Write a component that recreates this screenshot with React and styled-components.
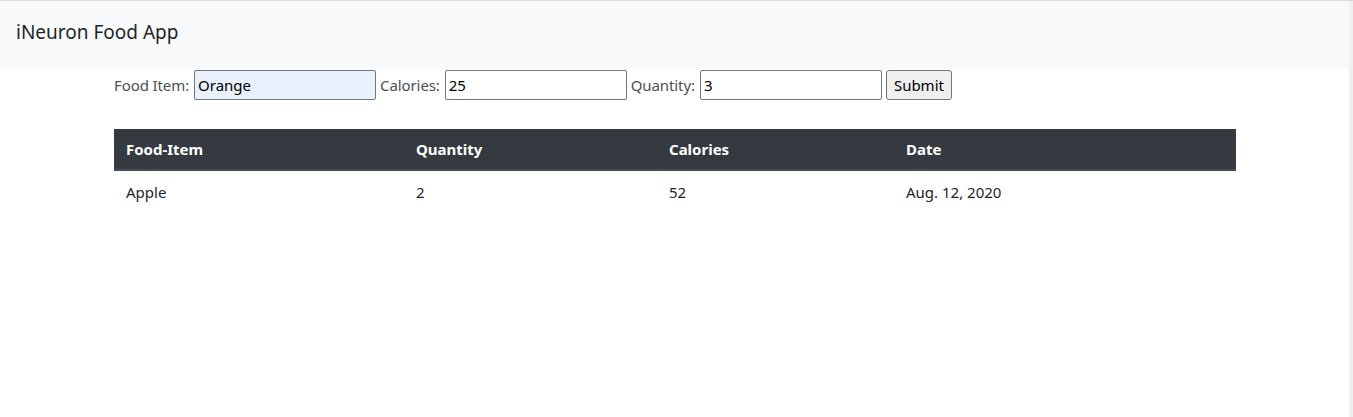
import React from 'react';
import styled, { createGlobalStyle } from 'styled-components';

const GlobalStyle = createGlobalStyle`
  html, body {
    margin: 0;
    padding: 0;
    background: #fff;
  }
  body {
    font-family: 'Noto Sans', 'Open Sans', sans-serif;
    color: #212529;
    border-top: 1px solid #dadada;
    min-height: 416px;
    box-sizing: border-box;
  }
`;

const Page = styled.div`
  display: flex;
  min-height: 416px;
`;

const Main = styled.div`
  flex: 1;
`;

/* 스크롤바 자리 */
const ScrollGutter = styled.div`
  width: 4px;
  background: #f0f0f0;
`;

const Navbar = styled.nav`
  height: 68px;
  background-color: #f8f9fa;
  display: flex;
  align-items: center;
  padding: 0 16px;
`;

const Brand = styled.a`
  font-size: 19px;
  color: #212529;
  text-decoration: none;
  margin-top: -6px;
`;

const Container = styled.div`
  width: 1122px;
  margin-left: 114px;
`;

const Form = styled.form`
  display: flex;
  align-items: center;
  height: 30px;
  margin-top: 1px;
  gap: 4px;
  font-size: 15px;
  color: #495057;
`;

const Label = styled.label`
  letter-spacing: -0.1px;
  margin-right: 1px;
`;

const Input = styled.input`
  box-sizing: border-box;
  width: 182px;
  height: 30px;
  border: 1px solid #767676;
  border-radius: 2px;
  padding: 0 3px;
  font-family: 'Noto Sans', 'Open Sans', sans-serif;
  font-size: 15px;
  color: #000;
  background: ${p => (p.$filled ? '#e8f0fe' : '#fff')};
  outline: none;
`;

const Button = styled.button`
  box-sizing: border-box;
  height: 30px;
  padding: 0 7px;
  border: 1px solid #767676;
  border-radius: 3px;
  background: #efefef;
  font-family: 'Noto Sans', 'Open Sans', sans-serif;
  font-size: 15px;
  color: #000;
`;

const Table = styled.table`
  width: 1122px;
  margin-top: 29px;
  border-collapse: collapse;
  font-size: 15px;
  table-layout: fixed;
`;

const Th = styled.th`
  background-color: #343a40;
  color: #fff;
  font-weight: 700;
  text-align: left;
  height: 40px;
  padding: 0 12px;
  border-bottom: 2px solid #454d55;
  width: ${p => p.$w - 24}px;
`;

const Td = styled.td`
  height: 42px;
  padding: 0 12px 3px;
  color: #212529;
`;

const columns = [
  { label: 'Food-Item', w: 290 },
  { label: 'Quantity', w: 253 },
  { label: 'Calories', w: 237 },
  { label: 'Date', w: 342 },
];

const rows = [['Apple', '2', '52', 'Aug. 12, 2020']];

export default function App() {
  return (
    <Page>
      <GlobalStyle />
      <Main>
        <Navbar>
          <Brand href="#">iNeuron Food App</Brand>
        </Navbar>
        <Container>
          <Form onSubmit={e => e.preventDefault()}>
            <Label>Food Item:</Label>
            <Input $filled defaultValue="Orange" />
            <Label>Calories:</Label>
            <Input defaultValue="25" />
            <Label>Quantity:</Label>
            <Input defaultValue="3" />
            <Button type="submit">Submit</Button>
          </Form>

          <Table>
            <thead>
              <tr>
                {columns.map(c => (
                  <Th key={c.label} $w={c.w}>{c.label}</Th>
                ))}
              </tr>
            </thead>
            <tbody>
              {rows.map((r, i) => (
                <tr key={i}>
                  {r.map((v, j) => <Td key={j}>{v}</Td>)}
                </tr>
              ))}
            </tbody>
          </Table>
        </Container>
      </Main>
      <ScrollGutter />
    </Page>
  );
}
